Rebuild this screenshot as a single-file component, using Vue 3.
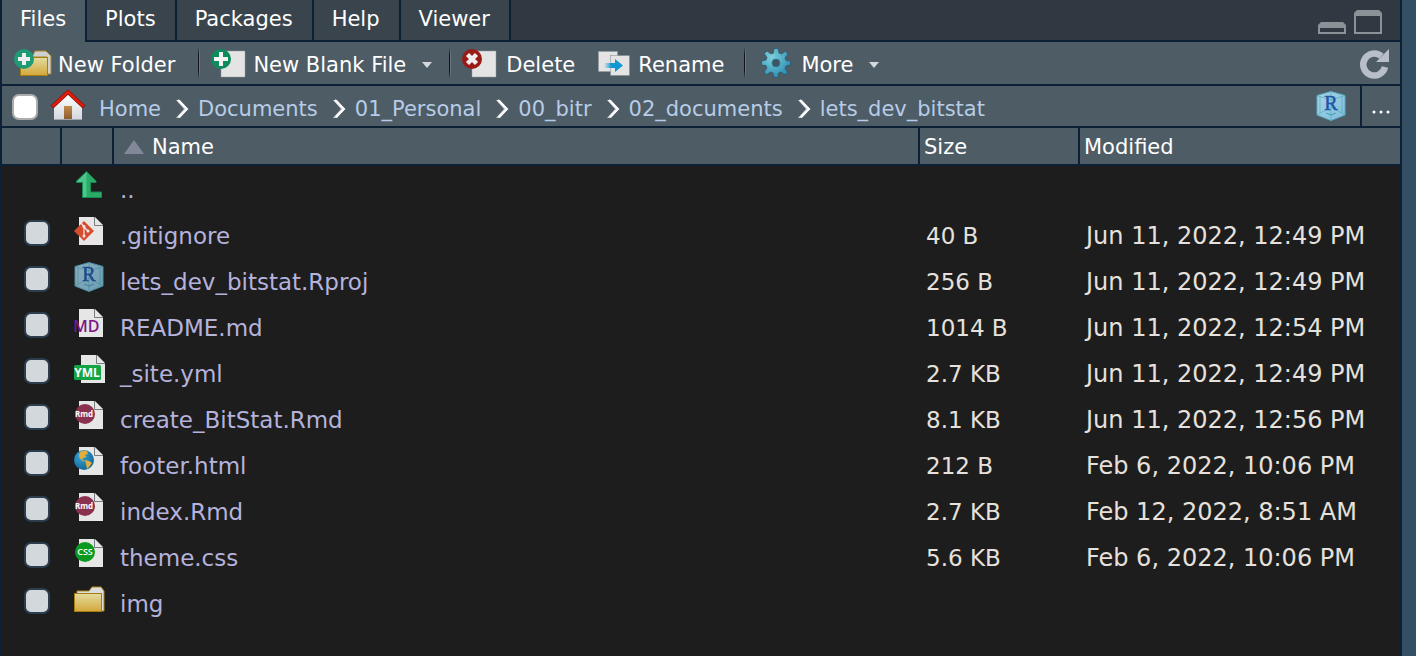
<script setup>
import { ref } from 'vue'

const tabs = ['Files', 'Plots', 'Packages', 'Help', 'Viewer']
const active = ref('Files')
const crumbs = ['Home', 'Documents', '01_Personal', '00_bitr', '02_documents', 'lets_dev_bitstat']
const files = [
  { name: '.gitignore', kind: 'git', size: '40 B', modified: 'Jun 11, 2022, 12:49 PM' },
  { name: 'lets_dev_bitstat.Rproj', kind: 'rproj', size: '256 B', modified: 'Jun 11, 2022, 12:49 PM' },
  { name: 'README.md', kind: 'md', size: '1014 B', modified: 'Jun 11, 2022, 12:54 PM' },
  { name: '_site.yml', kind: 'yml', size: '2.7 KB', modified: 'Jun 11, 2022, 12:49 PM' },
  { name: 'create_BitStat.Rmd', kind: 'rmd', size: '8.1 KB', modified: 'Jun 11, 2022, 12:56 PM' },
  { name: 'footer.html', kind: 'html', size: '212 B', modified: 'Feb 6, 2022, 10:06 PM' },
  { name: 'index.Rmd', kind: 'rmd', size: '2.7 KB', modified: 'Feb 12, 2022, 8:51 AM' },
  { name: 'theme.css', kind: 'css', size: '5.6 KB', modified: 'Feb 6, 2022, 10:06 PM' },
  { name: 'img', kind: 'folder', size: '', modified: '' }
]
</script>

<template>
  <div class="shell">
    <svg class="defs" width="0" height="0" aria-hidden="true">
      <defs>
        <linearGradient id="gold" x1="0" y1="0" x2="0" y2="1">
          <stop offset="0" stop-color="#e3dca0" />
          <stop offset="1" stop-color="#d3a73a" />
        </linearGradient>
        <linearGradient id="wall" x1="0" y1="0" x2="0" y2="1">
          <stop offset="0" stop-color="#ffffff" />
          <stop offset="1" stop-color="#d3d7de" />
        </linearGradient>
        <linearGradient id="door" x1="0" y1="0" x2="0" y2="1">
          <stop offset="0" stop-color="#c08a4c" />
          <stop offset="1" stop-color="#8f5d30" />
        </linearGradient>
        <linearGradient id="push" x1="0" y1="0" x2="1" y2="0">
          <stop offset="0" stop-color="#1098d2" stop-opacity="0" />
          <stop offset="0.4" stop-color="#1098d2" />
        </linearGradient>
        <radialGradient id="cog" cx="0.35" cy="0.3" r="0.8">
          <stop offset="0" stop-color="#7fd0da" />
          <stop offset="1" stop-color="#2487ae" />
        </radialGradient>
        <radialGradient id="ocean" cx="0.35" cy="0.3" r="0.8">
          <stop offset="0" stop-color="#35a5d6" />
          <stop offset="1" stop-color="#11618f" />
        </radialGradient>
        <linearGradient id="cube" x1="0" y1="0" x2="1" y2="1">
          <stop offset="0" stop-color="#a9d5e6" />
          <stop offset="1" stop-color="#7fbcd9" />
        </linearGradient>
      </defs>
      <symbol id="folder" viewBox="0 0 32 28">
        <path d="M3 9V5H15L18 1H27L30 5V25H26V9Z" fill="#dcdcdc" stroke="#b08a1c" stroke-width="1" />
        <rect x="0.500" y="7.500" width="27" height="18" fill="url(#gold)" stroke="#a87d10" stroke-width="1" />
      </symbol>
      <symbol id="page" viewBox="0 0 32 30">
        <path d="M5 1H21L29 9V29H5Z" fill="#e6e6e6" />
        <path d="M20.500 1V9.500H29" fill="none" stroke="#777c80" stroke-width="1" />
      </symbol>
      <symbol id="hexagon" viewBox="0 0 30 30">
        <path d="M15 0.500L29 4.500V24L15 29.500L1 24V4.500Z" fill="url(#cube)" stroke="#58abc4" stroke-width="1" />
        <path d="M1 4.500L15 9L29 4.500M15 1V29M1 24L15 16L29 24M4 5V22M26 5V22" fill="none" stroke="#4fa8bf" stroke-width="0.800" opacity="0.8" />
        <path d="M10 22L15 24L20 22" fill="none" stroke="#3e9fb5" stroke-width="1" />
      </symbol>
    </svg>

    <main class="pane">
      <nav class="tabs" aria-label="Panes">
        <button v-for="tab in tabs" :key="tab" class="tab" :class="{ on: tab === active }" @click="active = tab">{{ tab }}</button>
        <div class="window-buttons">
          <button aria-label="Minimize">
            <svg width="28" height="24" viewBox="0 0 28 24"><path fill="#8a9297" fill-rule="evenodd" d="M0 24V15L3 12H25L28 15V24ZM2 18V22H26V18Z" /></svg>
          </button>
          <button aria-label="Maximize">
            <svg width="28" height="24" viewBox="0 0 28 24"><path fill="#8a9297" fill-rule="evenodd" d="M0 24V3L3 0H25L28 3V24ZM2 6V22H26V6Z" /></svg>
          </button>
        </div>
      </nav>

      <div class="toolbar">
        <button class="tool folder">
          <svg width="38" height="30" viewBox="0 0 38 30">
            <path d="M18 9L21 3H32L37 8V26H33V9Z" fill="#cfd0d1" stroke="#a8841c" stroke-width="1" />
            <rect x="6.500" y="9.500" width="27" height="18" fill="url(#gold)" stroke="#a87d10" />
            <circle cx="10" cy="11" r="10" fill="#1f9a75" />
            <path d="M8 5H12V9H16V13H12V17H8V13H4V9H8Z" fill="#eee" />
          </svg>
          <span>New Folder</span>
        </button>
        <i class="rule"></i>
        <button class="tool menu">
          <svg width="34" height="30" viewBox="0 0 34 30">
            <path d="M10 3H34V29H10Z" fill="#e4e4e4" stroke="#9a9ea2" stroke-width="0.500" />
            <circle cx="10" cy="11" r="10" fill="#0c8c5c" />
            <path d="M8 4H12V9H17V13H12V18H8V13H3V9H8Z" fill="#f4f4f4" />
          </svg>
          <span>New Blank File</span>
          <svg class="caret" width="10" height="6" viewBox="0 0 10 6"><path d="M0 0H10L5 6Z" fill="#d6d9dc" /></svg>
        </button>
        <i class="rule"></i>
        <button class="tool delete">
          <svg width="34" height="30" viewBox="0 0 34 30">
            <path d="M10 3H34V29H10Z" fill="#e4e4e4" stroke="#9a9ea2" stroke-width="0.500" />
            <circle cx="10" cy="11" r="10" fill="#9a1a15" />
            <path d="M5.500 6.500L14.500 15.500M14.500 6.500L5.500 15.500" stroke="#eee" stroke-width="4.500" />
          </svg>
          <span>Delete</span>
        </button>
        <button class="tool rename">
          <svg width="32" height="30" viewBox="0 0 32 30">
            <rect x="0.500" y="3.500" width="19" height="20" fill="#e4e4e4" stroke="#969a9d" stroke-width="0.500" />
            <rect x="12.500" y="7.500" width="19" height="20" fill="#e4e4e4" stroke="#7e858a" stroke-width="0.500" />
            <path d="M6 15H17V11L25 17.500L17 24V20H6Z" fill="url(#push)" />
          </svg>
          <span>Rename</span>
        </button>
        <i class="rule"></i>
        <button class="tool more">
          <svg width="30" height="32" viewBox="-15 -16 30 32">
            <g fill="url(#cog)" stroke="#28566f" stroke-width="0.700">
              <path d="M-2 -14.500H2L3 -10L5.600 -9L9.400 -11.800L12 -9L9 -5L10 -2.500L14.500 -2V2L10 3L9 5.500L11.800 9.400L9 12L5 9L2.500 10L2 14.500H-2L-3 10L-5.500 9L-9.400 11.800L-12 9L-9 5L-10 2.500L-14.500 2V-2L-10 -3L-9 -5.500L-11.800 -9.400L-9 -12L-5 -9L-2.500 -10Z" />
            </g>
            <circle r="4" fill="#43535e" stroke="#287f9e" />
          </svg>
          <span>More</span>
          <svg class="caret" width="10" height="6" viewBox="0 0 10 6"><path d="M0 0H10L5 6Z" fill="#d6d9dc" /></svg>
        </button>
        <button class="refresh" aria-label="Refresh">
          <svg width="28" height="30" viewBox="0 0 28 30">
            <path d="M20.500 8.200A11 11 0 1 0 24 19" fill="none" stroke="#b9bfc9" stroke-width="6.500" />
            <path d="M28 1V14H15Z" fill="#b9bfc9" />
          </svg>
        </button>
      </div>

      <div class="path">
        <input class="check all" type="checkbox" aria-label="Select all files" />
        <svg class="house" width="34" height="32" viewBox="0 0 34 32">
          <path d="M3 17L17 4L31 17V30H3Z" fill="url(#wall)" />
          <path d="M3 29.500H31" stroke="#9fa5ad" />
          <rect x="13" y="16" width="8" height="13" fill="url(#door)" />
          <path d="M1 17L17 2L33 17" fill="none" stroke="#8e1208" stroke-width="4" />
          <path d="M1.500 16.500L17 2L32.500 16.500" fill="none" stroke="#e01d0c" stroke-width="2.500" />
        </svg>
        <nav class="crumbs" aria-label="Current folder">
          <template v-for="(crumb, i) in crumbs" :key="crumb">
            <svg v-if="i" width="12" height="20" viewBox="0 0 12 20">
              <path d="M0 1H4L12 10L4 19H0L8 10Z" fill="#d0d3d6" />
              <path d="M2 1L11 10L3 18" fill="none" stroke="#fff" stroke-width="2" />
            </svg>
            <a href="#">{{ crumb }}</a>
          </template>
        </nav>
        <button class="project" aria-label="Go to project directory">
          <svg width="30" height="30" viewBox="0 0 30 30"><use href="#hexagon" width="30" height="30" /><text x="15" y="19" class="glyph-r">R</text></svg>
        </button>
        <button class="dots" aria-label="Go to directory">
          <svg width="18" height="4" viewBox="0 0 18 4"><g fill="#fff"><circle cx="2" cy="2" r="1.500" /><circle cx="9" cy="2" r="1.500" /><circle cx="16" cy="2" r="1.500" /></g></svg>
        </button>
      </div>

      <table>
        <colgroup><col class="c-check" /><col class="c-icon" /><col /><col class="c-size" /><col class="c-date" /></colgroup>
        <thead>
          <tr>
            <th></th>
            <th></th>
            <th><button class="sort"><svg width="20" height="14" viewBox="0 0 20 14"><path d="M0 14L10 0L20 14Z" fill="#818998" /></svg>Name</button></th>
            <th>Size</th>
            <th>Modified</th>
          </tr>
        </thead>
        <tbody>
          <tr>
            <td></td>
            <td class="icon">
              <svg width="32" height="30" viewBox="0 0 32 30">
                <path d="M12.500 1.500L22 11V12.500H16.500V22H27.500V27.500H8.500V12.500H2.500V11Z" fill="#2bab68" stroke="#178a50" />
                <path d="M12.500 2L3 11.500V12H9V27H12.500Z" fill="#4ec58a" />
              </svg>
            </td>
            <td class="name"><a href="#">..</a></td>
            <td></td>
            <td></td>
          </tr>
          <tr v-for="file in files" :key="file.name">
            <td class="pick"><input class="check" type="checkbox" :aria-label="'Select ' + file.name" /></td>
            <td class="icon">
              <svg v-if="file.kind === 'rproj'" class="faded" width="32" height="30" viewBox="0 0 32 30"><use href="#hexagon" width="30" height="30" /><text x="15" y="19" class="glyph-r">R</text></svg>
              <svg v-else-if="file.kind === 'folder'" width="32" height="30" viewBox="0 0 32 30"><use href="#folder" x="0" y="2" width="32" height="28" /></svg>
              <svg v-else width="32" height="30" viewBox="0 0 32 30">
                <use href="#page" :x="file.kind === 'yml' ? 2 : 0" y="0" width="32" height="30" />
                <g v-if="file.kind === 'git'">
                  <path d="M10 5L20 15L10 25L0 15Z" fill="#d54c2f" />
                  <path d="M7 7L10 10.500V20M10 11L14 15" fill="none" stroke="#f3e8e4" stroke-width="1.200" />
                  <g fill="#f3e8e4"><circle cx="10" cy="10.500" r="1.500" /><circle cx="10" cy="20" r="1.500" /><circle cx="14" cy="15" r="1.500" /></g>
                </g>
                <text v-else-if="file.kind === 'md'" x="-1" y="24" class="glyph-md">MD</text>
                <g v-else-if="file.kind === 'yml'">
                  <rect x="0" y="11" width="27" height="15" rx="1.500" fill="#12a445" />
                  <text x="13" y="23" class="glyph-yml">YML</text>
                </g>
                <g v-else-if="file.kind === 'rmd'">
                  <circle cx="11" cy="14" r="10" fill="#8b3150" />
                  <text x="10" y="17" class="glyph-rmd">Rmd</text>
                </g>
                <g v-else-if="file.kind === 'html'">
                  <circle cx="10" cy="14" r="10" fill="url(#ocean)" />
                  <path d="M6 6L9 4.500L13 5L14 8L11 9L12.500 11L9 12L8 13.500L11 15L9 15.500L5.500 12L5 9ZM11 14L15 15L18 17L15 21L13 23L12 18Z" fill="#e2ae3c" />
                </g>
                <g v-else>
                  <circle cx="11" cy="14" r="10" fill="#0b9a20" />
                  <text x="11" y="17" class="glyph-css">CSS</text>
                </g>
              </svg>
            </td>
            <td class="name"><a href="#">{{ file.name }}</a></td>
            <td class="size">{{ file.size }}</td>
            <td class="date">{{ file.modified }}</td>
          </tr>
        </tbody>
      </table>
    </main>
  </div>
</template>

<style>
body { background: #1d1d1d; }
</style>

<style scoped>
.shell {
  box-sizing: border-box;
  min-height: 100vh;
  padding: 0 14px 0 0;
  background: #344e64;
  font-family: "DejaVu Sans", sans-serif;
  font-size: 21px;
  color: #fff;
}
.defs { position: absolute; }
svg { display: block; flex: none; overflow: visible; }
button {
  margin: 0;
  padding: 0;
  border: 0;
  background: none;
  font: inherit;
  color: inherit;
}
a { text-decoration: none; }
.pane {
  box-sizing: border-box;
  min-height: 100vh;
  border: 0 solid #0c2135;
  border-width: 0 2px;
  background: #1d1d1d;
}
.tabs {
  display: flex;
  height: 42px;
  background: linear-gradient(#0c2135, #0c2135) 0 100% / 100% 2px no-repeat, #303941;
}
.tab {
  height: 40px;
  padding: 0 19px 2px 18px;
  border-right: 2px solid #0c2135;
  background: #3a444c;
}
.tab.on { height: 42px; padding-bottom: 4px; background: #4e5c66; }
.window-buttons {
  display: flex;
  align-items: flex-start;
  gap: 8px;
  margin-left: auto;
  padding: 10px 18px 0 0;
}
.toolbar, .path {
  display: flex;
  align-items: center;
  height: 42px;
  border-bottom: 2px solid #0c2135;
  background: #4e5c66;
}
.toolbar { padding: 0 11px 0 12px; }
.tool { display: flex; align-items: center; gap: 8px; }
.tool span { padding-top: 3px; }
.folder { gap: 6px; }
.delete, .more { gap: 10px; }
.caret { margin: 4px 0 0 8px; }
.rename { margin-left: 23px; }
.more .caret { margin-left: 6px; }
.rule {
  width: 2px;
  height: 32px;
  margin: 0 11px 0 20px;
  background: linear-gradient(90deg, #101418 50%, #6b7780 50%);
  mask-image: linear-gradient(transparent, #000 25%, #000 75%, transparent);
}
.folder + .rule { margin-left: 23px; }
.menu + .rule { margin-left: 17px; }
.more { margin-left: 4px; }
.refresh { margin-left: auto; }
.path { height: 40px; padding-left: 10px; }
.check {
  appearance: none;
  box-sizing: border-box;
  flex: none;
  display: block;
  width: 26px;
  height: 26px;
  margin: 0;
  border: 2px solid #2b3d4e;
  border-radius: 7px;
  background: #d3d8dd;
}
.check.all { margin-top: 2px; border-color: #acacac; background: #fff; }
.check:checked { background: #3f7fc0; }
.house { margin: 0 14px 0 13px; }
.crumbs {
  display: flex;
  align-items: center;
  gap: 10px;
  padding-top: 5px;
  color: #b7cce6;
}
.crumbs a { color: inherit; }
.crumbs svg { margin-left: 5px; }
.project { margin: 0 14px 0 auto; }
.dots {
  display: flex;
  align-items: center;
  justify-content: center;
  width: 40px;
  height: 40px;
  padding-top: 12px;
  border-left: 2px solid #0c2135;
  box-sizing: border-box;
}
table {
  width: 100%;
  table-layout: fixed;
  border-collapse: separate;
  border-spacing: 0;
}
.c-check { width: 60px; }
.c-icon { width: 52px; }
.c-size { width: 160px; }
.c-date { width: 320px; }
th {
  box-sizing: border-box;
  height: 38px;
  padding: 1px 4px 0;
  border: 0 solid #0c2135;
  border-width: 0 2px 2px 0;
  background: #4e5c66;
  text-align: left;
  font-weight: 400;
}
th:last-child { border-right: 0; }
.sort { display: flex; align-items: center; gap: 8px; padding-left: 6px; }
td {
  box-sizing: border-box;
  height: 46px;
  padding: 2px 6px 0;
  font-size: 23px;
  color: #e6e1dc;
  white-space: nowrap;
}
td.pick { padding: 0 0 4px 22px; }
td.icon { padding: 0 0 8px 12px; }
td.name a { color: #b5b2dc; }
td.date { font-size: 24px; }
.faded { opacity: 0.8; }
.glyph-r { font: 400 20px "Liberation Serif", serif; fill: #2055a8; stroke: #2055a8; stroke-width: 0.5px; text-anchor: middle; }
.glyph-md { font: 600 16px "Open Sans", sans-serif; fill: #7b1682; }
.glyph-yml { font: 700 12px "Open Sans", sans-serif; fill: #fff; text-anchor: middle; }
.glyph-rmd { font: 700 8px "Open Sans", sans-serif; fill: #fff; text-anchor: middle; }
.glyph-css { font: 600 9px "Open Sans", sans-serif; fill: #fff; text-anchor: middle; }
</style>
